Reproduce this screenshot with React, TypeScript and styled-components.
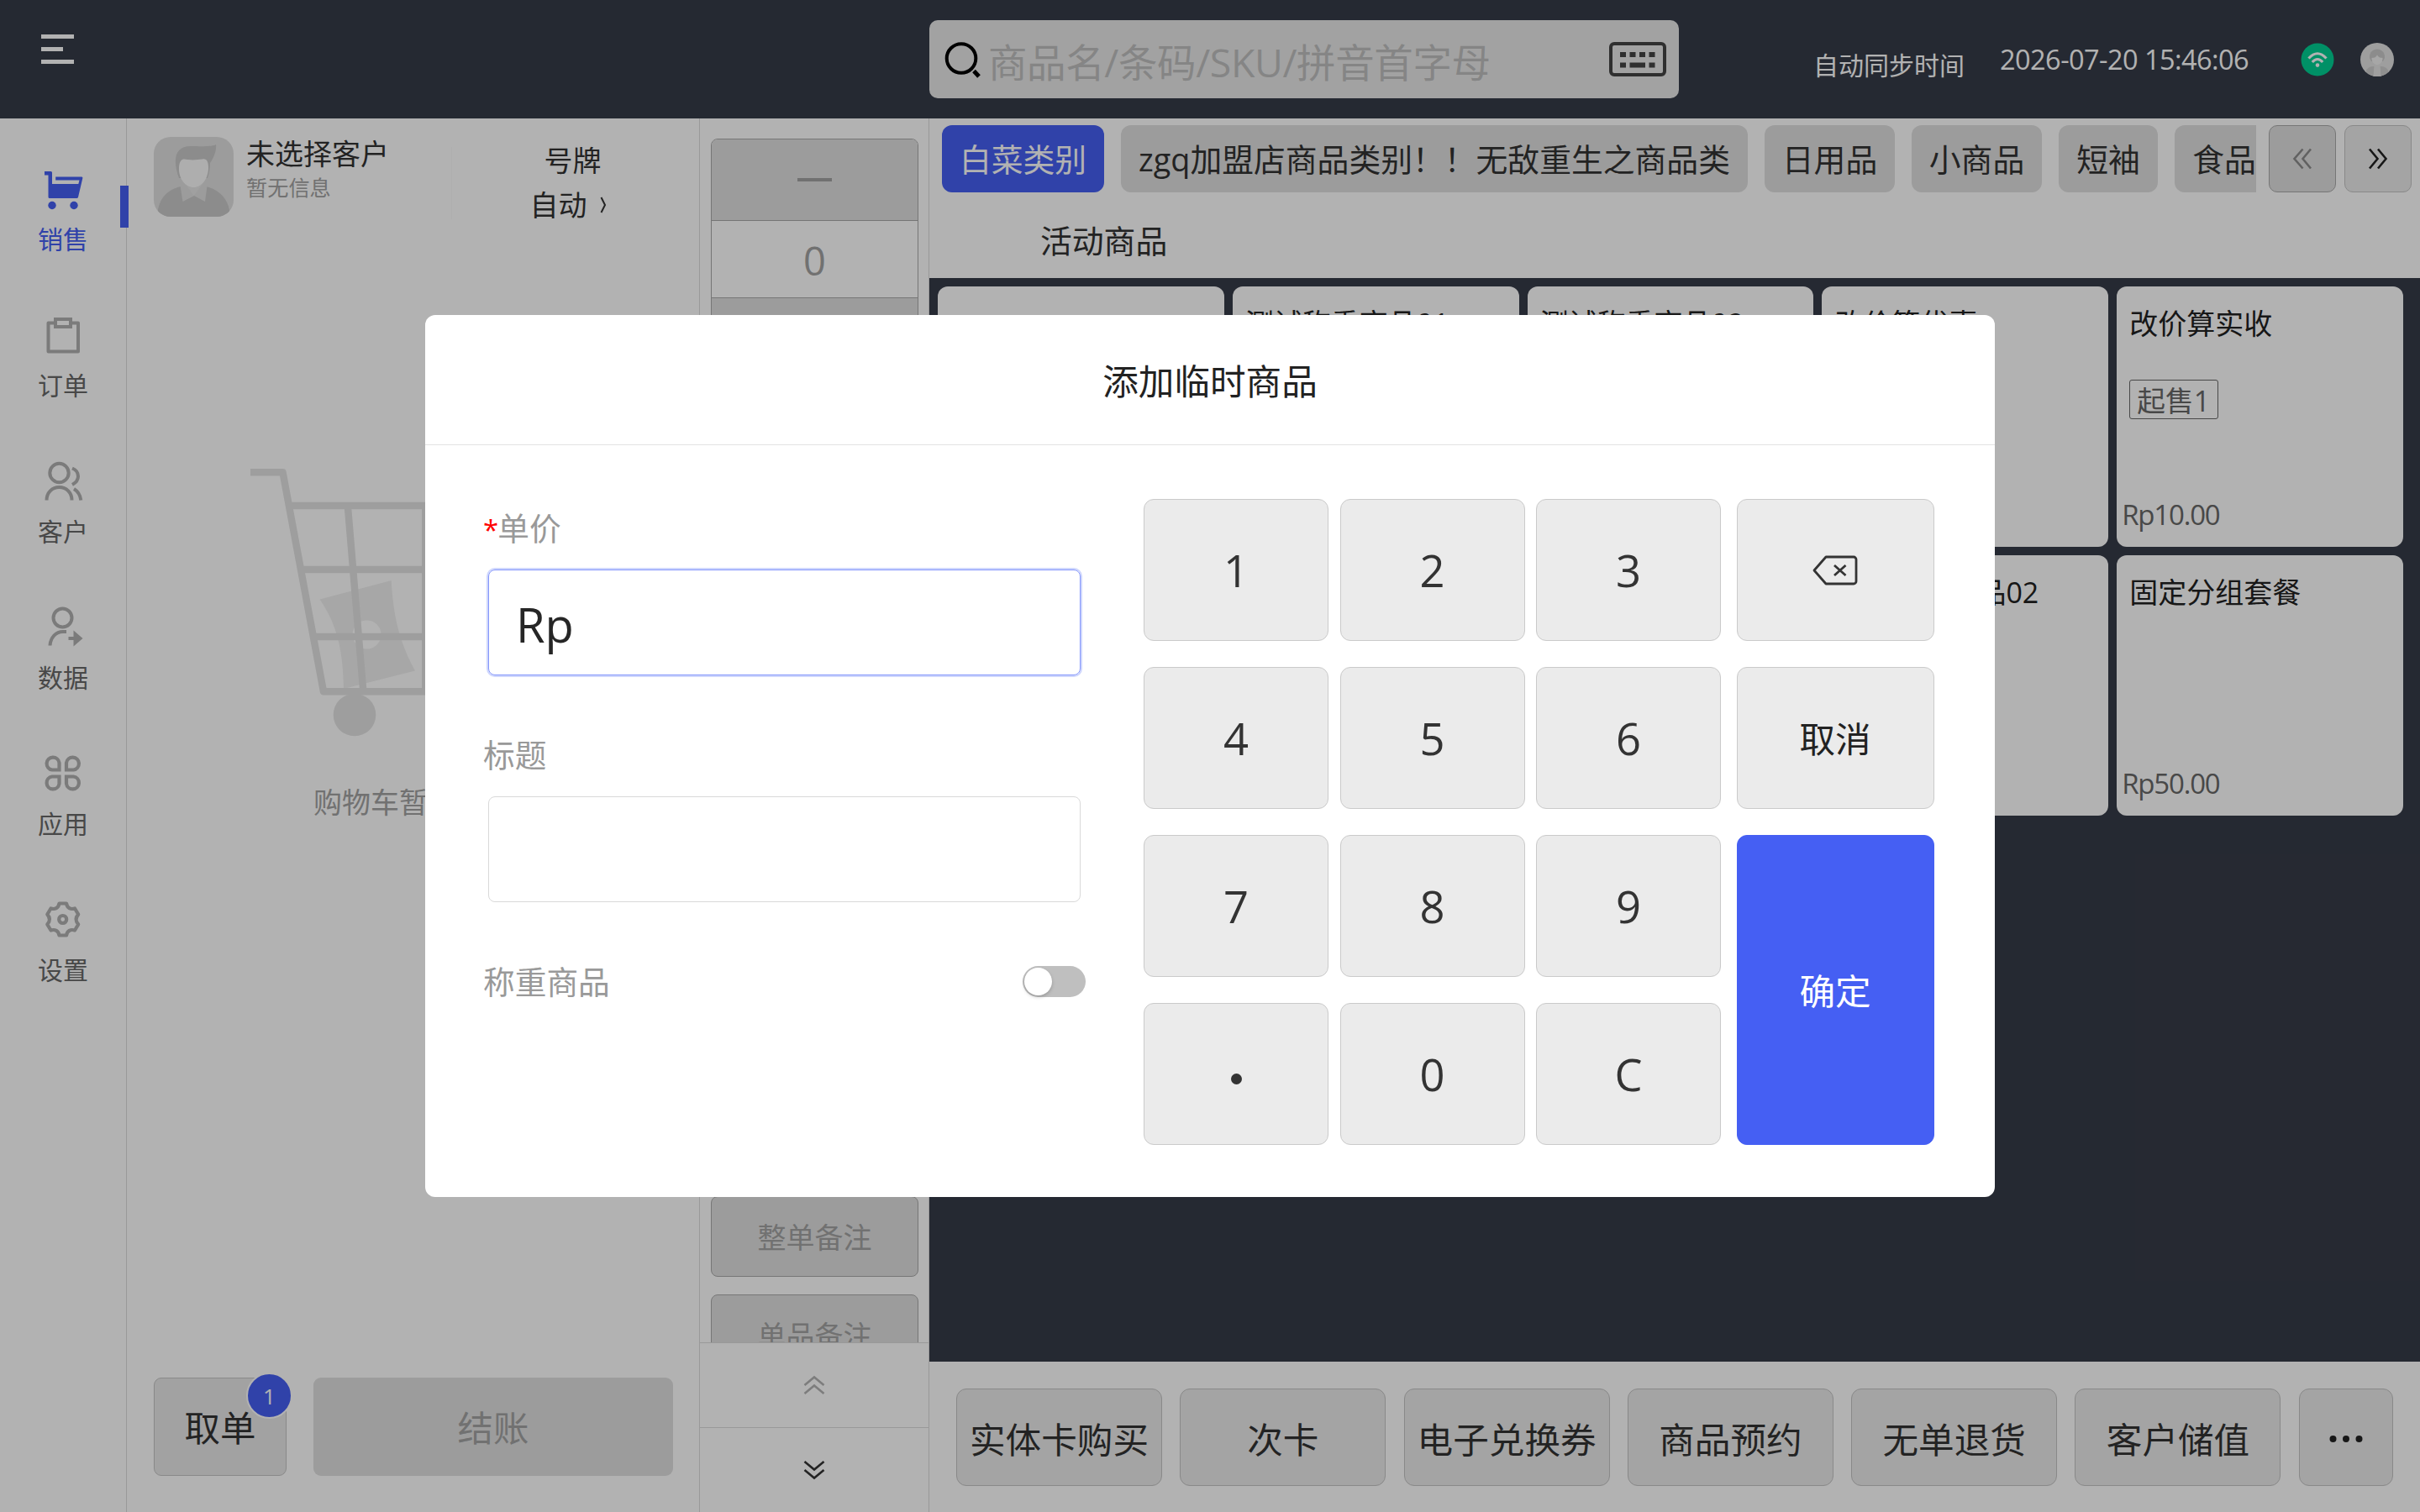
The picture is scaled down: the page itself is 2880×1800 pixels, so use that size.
import React from "react";
import styled, { createGlobalStyle } from "styled-components";

const BLUE = "#455ff3";
const DARK = "#363b48";

const Global = createGlobalStyle`
  *, *::before, *::after { box-sizing: border-box; }
  html, body { margin: 0; padding: 0; }
  body {
    background: #fff;
    color: #333;
    font-family: "Open Sans", "Noto Sans CJK SC", sans-serif;
    overflow: hidden;
  }
  button, input { font: inherit; color: inherit; margin: 0; padding: 0; }
`;

const Screen = styled.div`
  position: relative;
  display: flex;
  flex-direction: column;
  width: 2880px;
  height: 1800px;
  overflow: hidden;
`;

/* ---------- top bar ---------- */
const TopBar = styled.header`
  display: flex;
  flex: none;
  height: 141px;
  padding: 0 31px 0 49px;
  background: ${DARK};
`;

const Burger = styled.div`
  display: flex;
  flex-direction: column;
  gap: 10px;
  width: 1057px;
  padding-top: 41px;
`;

const BurgerLine = styled.span<{ $w: number }>`
  width: ${(p) => p.$w}px;
  height: 5px;
  background: #fff;
`;

const Search = styled.div`
  display: flex;
  align-items: flex-start;
  width: 892px;
  height: 93px;
  margin-top: 24px;
  padding: 26px 15px 0 18px;
  border-radius: 10px;
  background: #e9e9e9;
`;

const Placeholder = styled.span`
  flex: 1;
  margin: -6px 0 0 8px;
  font-size: 46.5px;
  line-height: 60px;
  letter-spacing: -0.4px;
  color: #bfbfbf;
  white-space: nowrap;
`;

const SyncLabel = styled.span`
  margin: 58px 0 0 160px;
  font-size: 30px;
  line-height: 40px;
  color: #fff;
  white-space: nowrap;
`;

const Clock = styled.span`
  width: 358px;
  margin: 51px 0 0 42px;
  font-size: 32.5px;
  line-height: 40px;
  letter-spacing: -0.55px;
  color: #fff;
  white-space: nowrap;
`;

const RoundIcons = styled.div`
  display: flex;
  gap: 31px;
  margin-top: 51px;
`;

/* ---------- body ---------- */
const Body = styled.div`
  display: flex;
  flex: 1;
  min-height: 0;
`;

const Nav = styled.nav`
  display: flex;
  flex-direction: column;
  width: 151px;
  padding-top: 56px;
  border-right: 1px solid #dcdcdc;
`;

const NavItem = styled.div<{ $active?: boolean }>`
  position: relative;
  display: flex;
  flex-direction: column;
  align-items: center;
  height: 174px;
  color: ${(p) => (p.$active ? BLUE : "#686868")};
  ${(p) =>
    p.$active &&
    `&::after { content: ""; position: absolute; right: -3px; top: 24px; width: 10px; height: 50px; background: ${BLUE}; }`}
  svg { color: ${(p) => (p.$active ? BLUE : "#b0b0b0")}; }
`;

const NavIcon = styled.div`
  display: flex;
  height: 60px;
  svg { display: block; }
`;

const NavLabel = styled.span`
  margin-top: 8px;
  font-size: 30px;
  line-height: 40px;
`;

/* ---------- order panel ---------- */
const OrderPanel = styled.section`
  display: flex;
  flex-direction: column;
  width: 682px;
  padding: 22px 31px 43px 32px;
  border-right: 1px solid #dcdcdc;
`;

const CustomerRow = styled.div`
  display: flex;
  height: 98px;
`;

const Avatar = styled.div`
  width: 95px;
  height: 95px;
  border-radius: 20px;
  overflow: hidden;
`;

const CustomerText = styled.div`
  display: flex;
  flex-direction: column;
  width: 244px;
  margin-left: 15px;
`;

const CustomerName = styled.span`
  margin-top: -2px;
  font-size: 34px;
  line-height: 44px;
`;

const CustomerSub = styled.span`
  margin-top: 1px;
  font-size: 25.2px;
  line-height: 34px;
  color: #a3a3a3;
`;

const Plate = styled.div`
  display: flex;
  flex-direction: column;
  align-items: center;
  align-self: flex-end;
  flex: 1;
  height: 86px;
  padding-left: 13px;
  border-left: 1px solid #f9f9f9;
  font-size: 34px;
  line-height: 44px;
`;

const PlateTitle = styled.span`
  margin: -6px -11px 0 0;
`;

const PlateValue = styled.span`
  display: flex;
  align-items: center;
  gap: 15px;
  margin: 9px 0 0 0;
`;

const EmptyCart = styled.div`
  display: flex;
  flex: 1;
  flex-direction: column;
  align-items: center;
  padding-top: 295px;
`;

const EmptyText = styled.span`
  margin-top: 55px;
  font-size: 34px;
  line-height: 44px;
  color: #a3a3a3;
`;

const OrderActions = styled.div`
  display: flex;
  gap: 32px;
  height: 117px;
`;

const HoldButton = styled.button`
  position: relative;
  width: 158px;
  padding-top: 2px;
  border: 1px solid #c4c4c4;
  border-radius: 9px;
  background: #e9e9e9;
  font-size: 42.5px;
  line-height: 60px;
`;

const Badge = styled.span`
  position: absolute;
  top: -7px;
  right: -8px;
  width: 55px;
  height: 55px;
  border: 2px solid #fff;
  border-radius: 50%;
  background: ${BLUE};
  color: #fff;
  font-size: 26px;
  line-height: 53px;
  text-align: center;
`;

const PayButton = styled.button`
  width: 428px;
  padding-top: 2px;
  border: 0;
  border-radius: 9px;
  background: #e0e0e0;
  color: #a3a3a3;
  font-size: 42.5px;
  line-height: 60px;
`;

/* ---------- quantity / remark column ---------- */
const SideColumn = styled.section`
  display: flex;
  flex-direction: column;
  width: 273px;
  border-right: 1px solid #dcdcdc;
`;

const SideScroll = styled.div`
  display: flex;
  flex-direction: column;
  gap: 21px;
  height: 1457px;
  padding: 24px 12px 0 13px;
  overflow: hidden;
`;

const Stepper = styled.div`
  display: flex;
  flex: none;
  flex-direction: column;
  height: 302px;
  border: 1px solid #aaa;
  border-radius: 8px;
  overflow: hidden;
`;

const StepCell = styled.div<{ $plain?: boolean }>`
  display: flex;
  flex: none;
  align-items: center;
  justify-content: center;
  height: ${(p) => (p.$plain ? 92 : 97)}px;
  padding-top: ${(p) => (p.$plain ? 2 : 0)}px;
  border-bottom: 1px solid #aaa;
  background: ${(p) => (p.$plain ? "#fff" : "#e0e0e0")};
  color: #a3a3a3;
  font-size: 47px;
`;

const Dash = styled.span`
  width: 41px;
  height: 4px;
  background: #a3a3a3;
`;

const SideButton = styled.button`
  flex: none;
  height: 96px;
  padding-top: 1px;
  border: 1px solid #aaa;
  border-radius: 8px;
  background: #e0e0e0;
  color: #a3a3a3;
  font-size: 34px;
  line-height: 44px;
`;

const Pager = styled.div<{ $muted?: boolean }>`
  display: flex;
  flex: 1;
  align-items: center;
  justify-content: center;
  border-top: 1px solid #dcdcdc;
  color: ${(p) => (p.$muted ? "#b4b4b4" : "#333")};
`;

/* ---------- catalogue ---------- */
const Catalogue = styled.main`
  display: flex;
  flex: 1;
  flex-direction: column;
  min-width: 0;
`;

const CategoryArea = styled.div`
  flex: none;
  height: 190px;
  padding: 8px 0 0 15px;
`;

const CategoryRow = styled.div`
  display: flex;
  height: 80px;
`;

const CategoryList = styled.div`
  display: flex;
  flex: none;
  gap: 20px;
  width: 1564px;
  margin-right: 15px;
  overflow: hidden;
`;

const Category = styled.button<{ $active?: boolean; $w?: number }>`
  flex: none;
  width: ${(p) => (p.$w ? p.$w + "px" : "auto")};
  padding: 2px 0 0;
  border: 0;
  border-radius: 12px;
  background: ${(p) => (p.$active ? BLUE : "#e0e0e0")};
  color: ${(p) => (p.$active ? "#fff" : "#333")};
  font-size: 37.8px;
  line-height: 50px;
  white-space: nowrap;
`;

const ScrollButton = styled.button<{ $muted?: boolean }>`
  display: flex;
  flex: none;
  align-items: center;
  justify-content: center;
  width: 80px;
  margin-right: 10px;
  border: 1px solid ${(p) => (p.$muted ? "#aaa" : "#c4c4c4")};
  border-radius: 10px;
  background: ${(p) => (p.$muted ? "#e0e0e0" : "#ebebeb")};
  color: ${(p) => (p.$muted ? "#8c8c8c" : "#222")};
`;

const SubCategory = styled.div`
  padding: 33px 0 0 117px;
  font-size: 37.8px;
  line-height: 50px;
`;

const Products = styled.div`
  display: grid;
  flex: 1;
  grid-template-columns: repeat(5, 340.8px);
  grid-auto-rows: 310px;
  align-content: start;
  gap: 10px;
  padding: 10px;
  background: ${DARK};
`;

const Card = styled.article`
  display: flex;
  flex-direction: column;
  align-items: flex-start;
  padding: 22px 6px 16px;
  border-radius: 12px;
  background: #fff;
`;

const CardTitle = styled.h3`
  height: 44px;
  margin: 0 0 0 9px;
  color: #222;
  font-size: 34px;
  font-weight: 400;
  line-height: 44px;
`;

const CardTag = styled.span`
  height: 47px;
  margin: 45px 0 0 9px;
  padding: 0 9px 0 8px;
  border: 1px solid #686868;
  border-radius: 3px;
  color: #686868;
  font-size: 33.75px;
  line-height: 48px;
`;

const CardPrice = styled.span`
  margin-top: auto;
  color: #686868;
  font-size: 33px;
  letter-spacing: -1.2px;
  line-height: 44px;
`;

const QuickBar = styled.footer`
  display: flex;
  gap: 21.3px;
  flex: none;
  height: 179px;
  padding: 32px 32px 31px;
`;

const QuickButton = styled.button<{ $narrow?: boolean }>`
  display: flex;
  flex: none;
  align-items: center;
  justify-content: center;
  width: ${(p) => (p.$narrow ? 112 : 245)}px;
  padding-top: 3px;
  border: 1px solid #c4c4c4;
  border-radius: 12px;
  background: #ebebeb;
  font-size: 42.6px;
  line-height: 60px;
  white-space: nowrap;
`;

/* ---------- dialog ---------- */
const Overlay = styled.div`
  position: absolute;
  inset: 0;
  display: flex;
  align-items: center;
  justify-content: center;
  background: rgba(0, 0, 0, 0.3);
`;

const Dialog = styled.div`
  display: flex;
  flex-direction: column;
  width: 1868px;
  height: 1050px;
  border-radius: 12px;
  background: #fff;
`;

const DialogTitle = styled.h2`
  flex: none;
  height: 155px;
  margin: 0;
  padding-top: 48px;
  border-bottom: 1px solid #e3e3e3;
  color: #222;
  font-size: 42.6px;
  font-weight: 400;
  line-height: 60px;
  text-align: center;
`;

const DialogBody = styled.div`
  display: flex;
  flex: 1;
`;

const Form = styled.div`
  display: flex;
  flex-direction: column;
  width: 718px;
  margin-left: 69px;
  padding-top: 73px;
`;

const FieldLabel = styled.label`
  height: 50px;
  color: #999;
  font-size: 37.7px;
  line-height: 51px;
`;

const Required = styled.span`
  color: #f00;
  font-size: 33px;
  letter-spacing: -1px;
`;

const Field = styled.div<{ $focus?: boolean }>`
  flex: none;
  width: 705px;
  height: 126px;
  margin: 25px 0 69px 6px;
  padding: 22px 0 0 32px;
  border: 1px solid ${(p) => (p.$focus ? "#8496fb" : "#d9d9d9")};
  border-radius: 8px;
  box-shadow: ${(p) => (p.$focus ? "0 0 0 2px #cfd7fd" : "none")};
  color: #262626;
  font-size: 56px;
  line-height: 84px;
`;

const SwitchRow = styled.div`
  display: flex;
  align-items: flex-start;
  justify-content: space-between;
`;

const Switch = styled.span`
  display: flex;
  width: 75px;
  height: 37px;
  margin-top: 7px;
  margin-right: 1px;
  padding: 2px;
  border-radius: 19px;
  background: #bfbfbf;
  &::before {
    content: "";
    width: 33px;
    height: 33px;
    border-radius: 50%;
    background: #fff;
    box-shadow: 0 2px 4px rgba(0, 0, 0, 0.2);
  }
`;

const Keypad = styled.div`
  display: grid;
  grid-template-columns: 220px 220px 220px 235px;
  grid-auto-rows: 169px;
  column-gap: 13.5px;
  row-gap: 31px;
  align-content: start;
  margin: 64px 0 0 68px;
`;

const Key = styled.button`
  display: flex;
  align-items: center;
  justify-content: center;
  border: 1px solid #cacaca;
  border-radius: 12px;
  background: #ebebeb;
  color: #333;
  font-size: 52.5px;
  line-height: 70px;
`;

const ActionKey = styled(Key)<{ $primary?: boolean }>`
  grid-row: ${(p) => (p.$primary ? "3 / span 2" : "auto")};
  grid-column: 4;
  margin: 0 -5.5px 0 5.5px;
  padding: 1px 1px 0 0;
  border-color: ${(p) => (p.$primary ? BLUE : "#cacaca")};
  background: ${(p) => (p.$primary ? BLUE : "#ebebeb")};
  color: ${(p) => (p.$primary ? "#fff" : "#222")};
  font-size: 42.6px;
`;

const KeyDot = styled.span`
  width: 13px;
  height: 13px;
  margin-top: 11px;
  border-radius: 50%;
  background: #333;
`;

/* ---------- drawings ---------- */
const CartIcon = () => (
  <svg width="48" height="60" viewBox="0 0 48 60" fill="currentColor">
    <path d="M2 7h7.500a1.500 1.500 0 0 1 1.500 1.500V22H42.300l1.200-4.500H15.200V13.500H46a1.300 1.300 0 0 1 1.300 1.700L42 37.700a1.800 1.800 0 0 1-1.700 1.300H8a1.500 1.500 0 0 1-1.500-1.500V11.500H2z" />
    <circle cx="11" cy="47.500" r="4.700" />
    <circle cx="37" cy="47.500" r="4.700" />
  </svg>
);

const ClipboardIcon = () => (
  <svg width="48" height="60" viewBox="0 0 48 60" fill="none" stroke="currentColor" strokeWidth="4" strokeLinejoin="round">
    <path d="M15 13.500H6.500V47.500H42V13.500H33" />
    <rect x="15" y="9" width="18" height="9" strokeLinejoin="miter" />
  </svg>
);

const UsersIcon = () => (
  <svg width="48" height="60" viewBox="0 0 48 60" fill="none" stroke="currentColor" strokeWidth="4">
    <circle cx="19.500" cy="18" r="11.200" />
    <path d="M4.500 50.500c0-9 6.500-15.500 15-15.500s15 6.500 15 15.500M35 12.500c5 2 7 5 7 9.500 0 4-2.500 7.500-7 10M37 37c5 3 7.500 7.500 8.300 13.500" />
  </svg>
);

const DataIcon = () => (
  <svg width="48" height="60" viewBox="0 0 48 60" fill="none" stroke="currentColor" strokeWidth="4">
    <circle cx="23.500" cy="16.500" r="11" />
    <path d="M8.500 49.500C9 40 15.500 33 24 33h4M30.500 41H39" />
    <path d="M36.500 31.500v19L47.500 41z" fill="currentColor" stroke="none" />
  </svg>
);

const AppsIcon = () => (
  <svg width="48" height="60" viewBox="0 0 48 60" fill="none" stroke="currentColor" strokeWidth="4.200">
    <path d="M19.500 23.500h-8.500a7.500 7.500 0 1 1 8.500-8.500zM28 23.500h8.500a7.500 7.500 0 1 0-8.500-8.500zM19.500 31.500h-8.500a7.500 7.500 0 1 0 8.500 8.500zM28 31.500h8.500a7.500 7.500 0 1 1-8.500 8.500z" />
  </svg>
);

const GearIcon = () => (
  <svg width="48" height="60" viewBox="0 0 48 60" fill="none" stroke="currentColor" strokeWidth="4.200" strokeLinejoin="round">
    <path d="M19.500 8.500h8.500c1 5.500 5 7.500 10 6l4.200 7c-3.500 4-3.500 8 0 12l-4.200 7c-5-1.500-9 .5-10 6h-8.500c-1-5.500-5-7.500-10-6l-4.200-7c3.500-4 3.500-8 0-12l4.200-7c5 1.500 9-.5 10-6z" />
    <circle cx="23.700" cy="27.500" r="4.500" />
  </svg>
);

const SearchIcon = () => (
  <svg width="44" height="44" viewBox="0 0 44 44" fill="none" stroke="#000" strokeWidth="4">
    <circle cx="20" cy="19.500" r="17.300" />
    <path d="M35 34.500l6 6.500" strokeWidth="5" />
  </svg>
);

const KeyboardIcon = () => (
  <svg width="68" height="42" viewBox="0 0 68 42">
    <rect x="2" y="2" width="64" height="37" rx="4" fill="none" stroke="#444" strokeWidth="4" />
    <path
      d="M13 12h7v6h-7zM24.500 12h7v6h-7zM36 12h7v6h-7zM47.500 12h7v6h-7zM13 24.500h7v6h-7zM24.500 24.500h18.500v6H24.500zM47.500 24.500h7v6h-7z"
      fill="#444"
    />
  </svg>
);

const WifiIcon = () => (
  <svg width="40" height="40" viewBox="0 0 40 40">
    <circle cx="20" cy="20" r="19.500" fill="#00ce93" />
    <g fill="none" stroke="#fff" strokeWidth="3.200">
      <path d="M9.500 18.500q10.500-11.500 21 0" />
      <path d="M13.800 23q6.200-7 12.400 0" />
    </g>
    <circle cx="20" cy="26.600" r="2.300" fill="#fff" />
  </svg>
);

const UserIcon = () => (
  <svg width="40" height="40" viewBox="0 0 40 40">
    <circle cx="20" cy="20" r="20" fill="#e2e2e2" />
    <path d="M6.500 34q2-5.500 8.500-6h10q6.500.500 8.500 6-5 6-13.500 6T6.500 34z" fill="#cdcdcd" />
    <path d="M16.500 26h7l1 14h-9z" fill="#e4e4e4" />
    <path d="M11 18c-1-14 19-14 18 0l-2 4H13z" fill="#c9c9c9" />
    <path d="M13.500 18q5 0 6.500-3.500 2 3.500 6.500 3.500c0 5-3 8-6.500 8s-6.500-3-6.500-8z" fill="#f0f0f0" />
  </svg>
);

const AvatarPicture = () => (
  <svg width="95" height="95" viewBox="0 0 95 95">
    <rect width="95" height="95" fill="#e0e0e0" />
    <path d="M4 95c1-22 12-32 28-36h30c16 4 28 14 29 36z" fill="#c9c9c9" />
    <path d="M31.500 58l6-4h20l6 4-2.500 19-13-7-13.500 7z" fill="#e0e0e0" />
    <path d="M38 56h20l-10.500 14z" fill="#e5e5e5" />
    <path d="M30 49c-8-22-5-38 14-38 10 0 25 1 30-2 1 8-3 16-7 22 0 6-1 12-3 18z" fill="#c9c9c9" />
    <path d="M30 38c0-12 5-12.500 10-11 8 1 12 0 18-.5 5-1 7 3 7 10 0 14-8.500 23.500-17.500 23.500S30 51 30 38z" fill="#fafafa" />
  </svg>
);

const EmptyCartPicture = () => (
  <svg width="390" height="322" viewBox="297 556 390 322">
    <path
      d="M380.500 713.500l85.200-22.500c2.500 48 12 78 28.300 107.500L409 820c-1-42-6-74-28.500-106.500zM436.500 738.500a17 17 0 1 0 .1 0z"
      fill="#f0f0f0"
      fillRule="evenodd"
    />
    <g fill="none" stroke="#e3e3e3" strokeWidth="8.500">
      <path d="M298 562.300h38.500L385 823.300H625L655 602H344" strokeLinejoin="round" />
      <path d="M358 678H645M373 758H634M413.800 602L432.300 823M506.300 602V823M592 602L580 823" />
    </g>
    <circle cx="422" cy="851" r="25.300" fill="#e3e3e3" />
    <circle cx="590" cy="851" r="25.300" fill="#e3e3e3" />
  </svg>
);

const DoubleChevron = ({ flip }: { flip?: boolean }) => (
  <svg width="24" height="26" viewBox="0 0 24 26" fill="none" stroke="currentColor" strokeWidth="2.600">
    <path
      d={
        flip
          ? "M12.500 1.500L2.500 13 12.500 24.500M22 1.500L12.500 13 22 24.500"
          : "M2 1.500L11.500 13 2 24.500M12 1.500L21.500 13 12 24.500"
      }
    />
  </svg>
);

const PagerChevron = ({ up }: { up?: boolean }) => (
  <svg width="26" height="24" viewBox="0 0 26 24" fill="none" stroke="currentColor" strokeWidth="2.600">
    <path d={up ? "M1.500 12L13 2.500 24.500 12M1.500 22L13 12.500 24.500 22" : "M1.500 2L13 11.500 24.500 2M1.500 12L13 21.500 24.500 12"} />
  </svg>
);

const SmallChevron = () => (
  <svg width="8" height="20" viewBox="0 0 8 20" fill="none" stroke="currentColor" strokeWidth="2">
    <path d="M1.500 1L6 10 1.500 19" />
  </svg>
);

const BackspaceIcon = () => (
  <svg width="54" height="36" viewBox="0 0 54 36" fill="none" stroke="#333" strokeWidth="2.800" strokeLinejoin="round">
    <path d="M16 2H49a3 3 0 0 1 3 3V31a3 3 0 0 1-3 3H16L2 18z" />
    <path d="M26 12l13.500 12M39.500 12L26 24" />
  </svg>
);

const Dots = () => (
  <svg width="40" height="10" viewBox="0 0 40 10" fill="#222">
    <circle cx="4.500" cy="5" r="4" />
    <circle cx="20" cy="5" r="4" />
    <circle cx="35.500" cy="5" r="4" />
  </svg>
);

/* ---------- data ---------- */
const navItems = [
  { label: "销售", Icon: CartIcon, active: true },
  { label: "订单", Icon: ClipboardIcon },
  { label: "客户", Icon: UsersIcon },
  { label: "数据", Icon: DataIcon },
  { label: "应用", Icon: AppsIcon },
  { label: "设置", Icon: GearIcon },
];

const categories = [
  { label: "白菜类别", w: 193, active: true },
  { label: "zgq加盟店商品类别！！无敌重生之商品类", w: 746 },
  { label: "日用品", w: 155 },
  { label: "小商品", w: 155 },
  { label: "短袖", w: 118 },
  { label: "食品", w: 118 },
];

const products: { title: string; tag?: string; price?: string }[] = [
  { title: "" },
  { title: "测试称重商品01" },
  { title: "测试称重商品02" },
  { title: "改价算优惠" },
  { title: "改价算实收", tag: "起售1", price: "Rp10.00" },
  { title: "" },
  { title: "" },
  { title: "" },
  { title: "测试普通商品02" },
  { title: "固定分组套餐", price: "Rp50.00" },
];

const quickActions = ["实体卡购买", "次卡", "电子兑换券", "商品预约", "无单退货", "客户储值"];

export default function App() {
  return (
    <>
      <Global />
      <Screen>
        <TopBar>
          <Burger>
            <BurgerLine $w={39} />
            <BurgerLine $w={26} />
            <BurgerLine $w={39} />
          </Burger>
          <Search>
            <SearchIcon />
            <Placeholder>商品名/条码/SKU/拼音首字母</Placeholder>
            <KeyboardIcon />
          </Search>
          <SyncLabel>自动同步时间</SyncLabel>
          <Clock>2026-07-20 15:46:06</Clock>
          <RoundIcons>
            <WifiIcon />
            <UserIcon />
          </RoundIcons>
        </TopBar>

        <Body>
          <Nav>
            {navItems.map(({ label, Icon, active }) => (
              <NavItem key={label} $active={active}>
                <NavIcon>
                  <Icon />
                </NavIcon>
                <NavLabel>{label}</NavLabel>
              </NavItem>
            ))}
          </Nav>

          <OrderPanel>
            <CustomerRow>
              <Avatar>
                <AvatarPicture />
              </Avatar>
              <CustomerText>
                <CustomerName>未选择客户</CustomerName>
                <CustomerSub>暂无信息</CustomerSub>
              </CustomerText>
              <Plate>
                <PlateTitle>号牌</PlateTitle>
                <PlateValue>
                  自动
                  <SmallChevron />
                </PlateValue>
              </Plate>
            </CustomerRow>
            <EmptyCart>
              <EmptyCartPicture />
              <EmptyText>购物车暂无商品</EmptyText>
            </EmptyCart>
            <OrderActions>
              <HoldButton>
                取单
                <Badge>1</Badge>
              </HoldButton>
              <PayButton>结账</PayButton>
            </OrderActions>
          </OrderPanel>

          <SideColumn>
            <SideScroll>
              <Stepper>
                <StepCell>
                  <Dash />
                </StepCell>
                <StepCell $plain>0</StepCell>
                <StepCell>+</StepCell>
              </Stepper>
              <SideButton>改数量</SideButton>
              <SideButton>改价</SideButton>
              <SideButton>折扣</SideButton>
              <SideButton>赠送</SideButton>
              <SideButton>删除</SideButton>
              <SideButton>清空</SideButton>
              <SideButton>导购</SideButton>
              <SideButton>挂单</SideButton>
              <SideButton>整单备注</SideButton>
              <SideButton>单品备注</SideButton>
            </SideScroll>
            <Pager $muted>
              <PagerChevron up />
            </Pager>
            <Pager>
              <PagerChevron />
            </Pager>
          </SideColumn>

          <Catalogue>
            <CategoryArea>
              <CategoryRow>
                <CategoryList>
                  {categories.map((c) => (
                    <Category key={c.label} $active={c.active} $w={c.w}>
                      {c.label}
                    </Category>
                  ))}
                </CategoryList>
                <ScrollButton $muted>
                  <DoubleChevron flip />
                </ScrollButton>
                <ScrollButton>
                  <DoubleChevron />
                </ScrollButton>
              </CategoryRow>
              <SubCategory>活动商品</SubCategory>
            </CategoryArea>
            <Products>
              {products.map((p, i) => (
                <Card key={i}>
                  <CardTitle>{p.title}</CardTitle>
                  {p.tag && <CardTag>{p.tag}</CardTag>}
                  {p.price && <CardPrice>{p.price}</CardPrice>}
                </Card>
              ))}
            </Products>
            <QuickBar>
              {quickActions.map((label) => (
                <QuickButton key={label}>{label}</QuickButton>
              ))}
              <QuickButton $narrow>
                <Dots />
              </QuickButton>
            </QuickBar>
          </Catalogue>
        </Body>

        <Overlay>
          <Dialog>
            <DialogTitle>添加临时商品</DialogTitle>
            <DialogBody>
              <Form>
                <FieldLabel>
                  <Required>*</Required>单价
                </FieldLabel>
                <Field $focus>Rp</Field>
                <FieldLabel>标题</FieldLabel>
                <Field />
                <SwitchRow>
                  <FieldLabel>称重商品</FieldLabel>
                  <Switch />
                </SwitchRow>
              </Form>
              <Keypad>
                <Key>1</Key>
                <Key>2</Key>
                <Key>3</Key>
                <ActionKey>
                  <BackspaceIcon />
                </ActionKey>
                <Key>4</Key>
                <Key>5</Key>
                <Key>6</Key>
                <ActionKey>取消</ActionKey>
                <Key>7</Key>
                <Key>8</Key>
                <Key>9</Key>
                <ActionKey $primary>确定</ActionKey>
                <Key>
                  <KeyDot />
                </Key>
                <Key>0</Key>
                <Key>C</Key>
              </Keypad>
            </DialogBody>
          </Dialog>
        </Overlay>
      </Screen>
    </>
  );
}
